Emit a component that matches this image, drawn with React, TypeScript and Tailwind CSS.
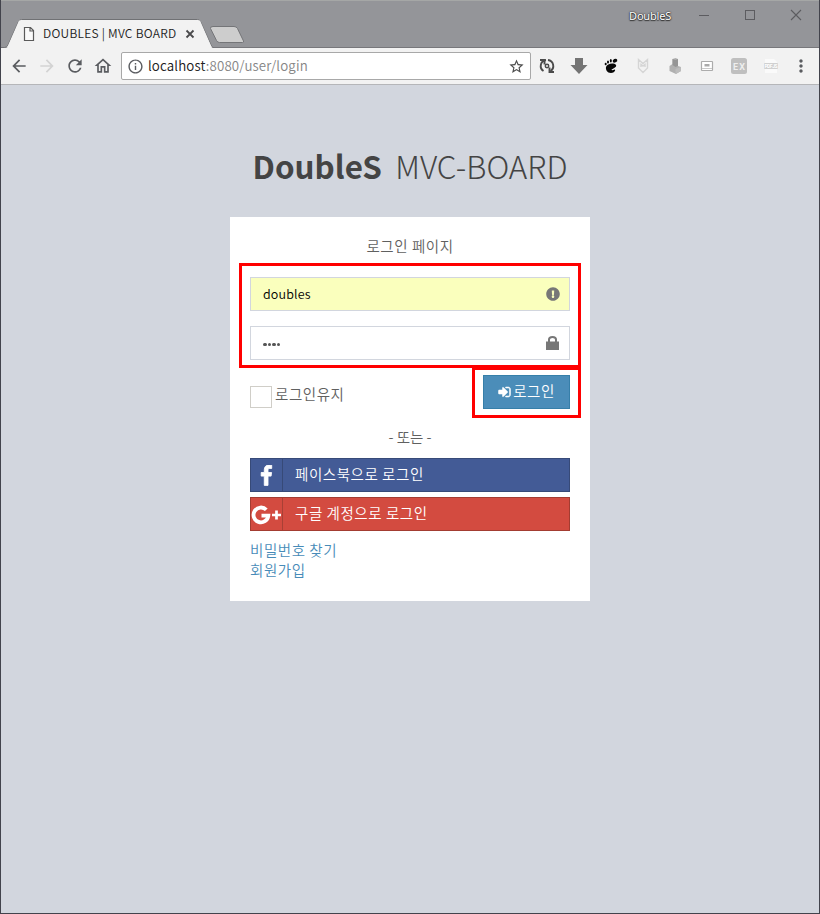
import React from "react";
import { FaExclamationCircle } from "react-icons/fa";
import { MdArrowBack, MdArrowForward, MdRefresh, MdOutlineHome, MdStarBorder, MdInfoOutline, MdMoreVert } from "react-icons/md";

function TitleBar() {
  return (
    <div className="relative h-[48px] w-full bg-[#949599]">
      <svg className="absolute inset-0" width="818" height="48" viewBox="1 0 818 48">
        <path d="M0 .5H820" stroke="#a5a7a6" />
        <path d="M0 47.5H820" stroke="#77777b" />
        <path d="M0 48V47.5H4.500Q7 47.500 8 45L18.500 21.500Q19.500 19.500 21.500 19.500H197.500Q199.500 19.500 200.500 21.500L211 45Q212 47.500 214 48Z" fill="#f2f2f2" stroke="#707174" />
        <path d="M7 48L19 20.500H200L212 48Z" fill="#f2f2f2" />
        <path d="M213 26.500H234Q236.500 26.500 237.500 28.500L243.500 41Q244 42.500 242.500 42.500H219.500Q217.500 42.500 216.500 40.500L210.500 28.500Q210 26.500 213 26.500Z" fill="#cdcdcd" stroke="#747578" />
        <path d="M24.500 27.500H30.500L33.500 30.500V40.500H24.500ZM30 27.500V31H33.500" fill="#fafafa" stroke="#5a5a5a" strokeWidth="1.200" />
        <path d="M186.500 30.500L193.500 37.500M193.500 30.500L186.500 37.500" stroke="#4a4a4c" strokeWidth="1.800" />
        <path d="M699 15.500H709" stroke="#5c5c60" />
        <rect x="745.500" y="10.500" width="9" height="9" fill="none" stroke="#5c5c60" />
        <path d="M791 10L801 20M801 10L791 20" stroke="#5c5c60" strokeWidth="1.100" />
      </svg>
      <div className="relative flex h-full w-full justify-between">
        <span className="ml-[42px] mt-[25px] h-4 whitespace-nowrap font-['Noto_Sans_CJK_KR',sans-serif] text-[12px] font-[350] leading-4 tracking-[0.250px] text-[#1c1c1c]">DOUBLES | MVC BOARD</span>
        <span className="mr-[148px] mt-[8px] h-4 font-['Noto_Sans',sans-serif] text-[11px] font-normal leading-4 tracking-[-0.200px] text-white [text-shadow:0_0_1px_#222,0_0_2px_#333,0_1px_1px_#333]">DoubleS</span>
      </div>
    </div>
  );
}

function Extensions() {
  return (
    <svg className="block" width="246" height="36" viewBox="534 48 246 36">
      <g fill="none" stroke="#4b4b4b" strokeWidth="1.900">
        <path d="M546 60A6 6 0 0 0 543.500 71M548 60A6 6 0 0 1 550.500 71" />
        <path d="M540 60H544.500V64.500M554 72H549.500V67.500" />
        <circle cx="547" cy="66" r="1.700" strokeWidth="1.500" />
      </g>
      <path d="M575 58H583V65H587.500L579 74L570.500 65H575Z" fill="#747474" />
      <g fill="#080808">
        <ellipse cx="615" cy="60.700" rx="2.400" ry="1.800" transform="rotate(-25 615 60.700)" />
        <ellipse cx="610.800" cy="60.800" rx="1" ry="1.700" /><ellipse cx="608" cy="62" rx="1" ry="1.600" /><ellipse cx="605.700" cy="64" rx="1" ry="1.300" />
        <path d="M606 67C607 63.500 614 62.500 616 65C617 67 613.500 68.500 612 69.300C610.500 70.500 613 70.500 614.500 69.500C616 69.200 615 72.800 611 73C607 73 605.500 69.500 606 67Z" />
      </g>
      <path d="M638.500 68V59.500L643 63.500L647.500 59.500V68L643 72.500ZM641 67V64.500L643 66L645 64.500V67" fill="none" stroke="#d5d5d5" strokeWidth="1.400" />
      <path d="M672.500 59L675.500 58L678 59V66L681 67V71L676 74L669.500 71V66L672.500 64Z" fill="#b0b0b0" />
      <path d="M672.500 59L675.500 60L678 59V66L675.500 67L672.500 65Z" fill="#959595" /><path d="M675.500 69L681 67V71L675.500 74Z" fill="#bcbcbc" />
      <rect x="701.500" y="61.500" width="11" height="9" rx=".5" fill="#fff" stroke="#acacac" strokeWidth="1.200" />
      <path d="M704.500 64H709.500V66.500H704.500Z" fill="#aaa" /><path d="M702 68.500H712" stroke="#c8c8c8" />
      <rect x="731" y="58" width="16" height="16" rx="2.500" fill="#bfbfbf" />
      <text x="733" y="70" className="font-['Roboto',sans-serif] text-[9px] font-bold" fill="#eee" textLength="12">EX</text>
      <path d="M765 59H774L777 62V73H765Z" fill="#fafafa" />
      <rect x="764" y="63" width="14" height="6" rx="1" fill="#d0d0d0" />
      <text x="764.500" y="68" className="font-['Roboto',sans-serif] text-[5px] font-bold" fill="#fff" textLength="13">PDF JS</text>
    </svg>
  );
}

function Toolbar() {
  return (
    <div className="flex h-[37px] w-full items-center border-b border-[#b5b6b9] bg-[#f2f2f2] pl-[8px] text-[#5a5c60]">
      <MdArrowBack size={20} className="shrink-0" />
      <MdArrowForward size={20} className="ml-[8px] shrink-0 text-[#d3d3d3]" />
      <MdRefresh size={20} className="ml-[8px] shrink-0" />
      <MdOutlineHome size={20} className="ml-[8px] shrink-0" />
      <div className="ml-[8px] flex h-[28px] w-[410px] shrink-0 items-center rounded-[2px] border border-[#a8a8a8] bg-white pl-[5px] pr-[5px]">
        <MdInfoOutline size={17} className="shrink-0" />
        <span className="ml-[4px] flex-1 whitespace-nowrap font-['Noto_Sans_CJK_KR',sans-serif] text-[13.300px] font-[350] leading-5 tracking-[0.150px] text-[#858585]"><span className="text-[#202020]">localhost</span>:8080/user/login</span>
        <MdStarBorder size={17} className="shrink-0 text-[#4c4c4c]" />
      </div>
      <div className="ml-[3px]"><Extensions /></div>
      <MdMoreVert size={20} className="ml-[11px] shrink-0" />
    </div>
  );
}

function LockIcon() {
  return (
    <svg width="14" height="14" viewBox="0 0 14 14" className="block">
      <path d="M0 5.500H13V14H0Z" fill="currentColor" />
      <path d="M3 6V3.500Q3 1 6.500 1T10 3.500V6" fill="none" stroke="currentColor" strokeWidth="2" />
    </svg>
  );
}

function SignInIcon() {
  return (
    <svg width="13" height="14" viewBox="0 0 1536 1792" fill="currentColor" stroke="currentColor" strokeWidth="70">
      <path d="M1184 896q0 26-19 45l-544 544q-19 19-45 19t-45-19-19-45v-288H64q-26 0-45-19t-19-45V704q0-26 19-45t45-19h448V352q0-26 19-45t45-19 45 19l544 544q19 19 19 45zm352-352v704q0 119-84.500 203.500T1248 1536H928q-13 0-22.500-9.500T896 1504q0-4-1-20t-.5-26.500 3-23.500 10-19.500T928 1408h320q66 0 113-47t47-113V544q0-66-47-113t-113-47H936l-11.500-1-11.500-3-8-5.500-7-9-2-13.500q0-4-1-20t-.5-26.500 3-23.500 10-19.500 20.500-6.500h320q119 0 203.500 84.500T1536 544z" />
    </svg>
  );
}

function FacebookIcon() {
  return (
    <svg width="12.500" height="22" viewBox="0 0 1024 1792" fill="currentColor" stroke="currentColor" strokeWidth="70" className="mt-[2px]">
      <path d="M959 12v264H802q-86 0-116 36t-30 108v189h293l-39 296H656v759H350V905H95V609h255V391q0-186 104-288.500T731 0q147 0 228 12z" />
    </svg>
  );
}

function GooglePlusIcon() {
  return (
    <svg width="32" height="32" viewBox="0 0 32 32" fill="none" stroke="currentColor" className="shrink-0">
      <path d="M15.300 11.800A7.400 7.400 0 1 0 17.300 17.700H10.500" strokeWidth="3.800" />
      <path d="M21 17H30M25.500 12.500V21.500" strokeWidth="2.700" />
    </svg>
  );
}

function Field({ value, password = false }: { value: string; password?: boolean }) {
  return (
    <div className={`flex h-[34px] items-center justify-between border border-[#d2d6de] pl-[12px] ${password ? "mt-[15px] bg-white" : "bg-[#faffbd]"}`}>
      {password ? (
        <span className="mt-[3px] flex gap-[1px]">{[...value].map((_, i) => <i key={i} className="size-[3.500px] rounded-full bg-[#555]" />)}</span>
      ) : (
        <span className="text-[12.500px] font-[350] leading-5 tracking-[0.150px] text-black">{value}</span>
      )}
      <span className="mr-[9px] flex w-[14px] justify-center text-[#777]">{password ? <LockIcon /> : <FaExclamationCircle size={14} />}</span>
    </div>
  );
}

function SocialButton({ label, google = false }: { label: string; google?: boolean }) {
  return (
    <button className={`flex h-[34px] w-full items-center border text-white ${google ? "mt-[5px] border-[#a33c31] bg-[#d34b40]" : "mt-[10px] border-[#374a78] bg-[#435b96]"}`}>
      <span className={`flex h-full w-[32px] shrink-0 items-center justify-center border-r ${google ? "border-[#a94035]" : "border-[#374a78]"}`}>
        {google ? <GooglePlusIcon /> : <FacebookIcon />}
      </span>
      <span className="mb-[2px] ml-[12px] text-[14.500px] leading-5 tracking-[0.550px]">{label}</span>
    </button>
  );
}

export default function App() {
  return (
    <div className="relative h-[914px] w-[820px] overflow-hidden border-x border-b border-[#42434c] bg-[#d2d6de] font-['Noto_Sans_CJK_KR',sans-serif] text-[14.500px] font-[350] leading-5 text-[#606060]">
      <TitleBar />
      <Toolbar />
      <main className="flex flex-col items-center pt-[56px]">
        <h1 className="flex h-[50px] w-[315px] items-center justify-between whitespace-nowrap text-[31.400px] leading-[50px] text-[#444]">
          <b className="font-bold">DoubleS</b><span className="font-light">MVC-BOARD</span>
        </h1>
        <section className="mt-[26px] h-[384px] w-[360px] bg-white p-5">
          <p className="-mt-px mb-[21px] text-center tracking-[0.550px]">로그인 페이지</p>
          <Field value="doubles" />
          <Field value="1234" password />
          <div className="mt-[15px] flex h-[34px] justify-between">
            <label className="flex"><span className="mt-[11px] size-[22px] border border-[#d0cec8] bg-white" /><span className="ml-[3px] mt-[9px] tracking-[0.550px]">로그인유지</span></label>
            <button className="flex h-[34px] w-[87px] items-center justify-center gap-[2px] border border-[#367fa9] bg-[#4b8db9] text-white"><SignInIcon /><span className="mb-[2px] tracking-[0.550px]">로그인</span></button>
          </div>
          <p className="mb-[11px] mt-[18px] text-center">- 또는 -</p>
          <SocialButton label="페이스북으로 로그인" />
          <SocialButton label="구글 계정으로 로그인" google />
          <div className="mt-[9px] flex flex-col tracking-[0.550px] text-[#478bb8]"><a>비밀번호 찾기</a><a>회원가입</a></div>
        </section>
      </main>
      <div className="absolute left-[238px] top-[263px] h-[105px] w-[342px] border-[3px] border-[#f00]" />
      <div className="absolute left-[471px] top-[367px] h-[51px] w-[109px] border-[3px] border-[#f00]" />
    </div>
  );
}
